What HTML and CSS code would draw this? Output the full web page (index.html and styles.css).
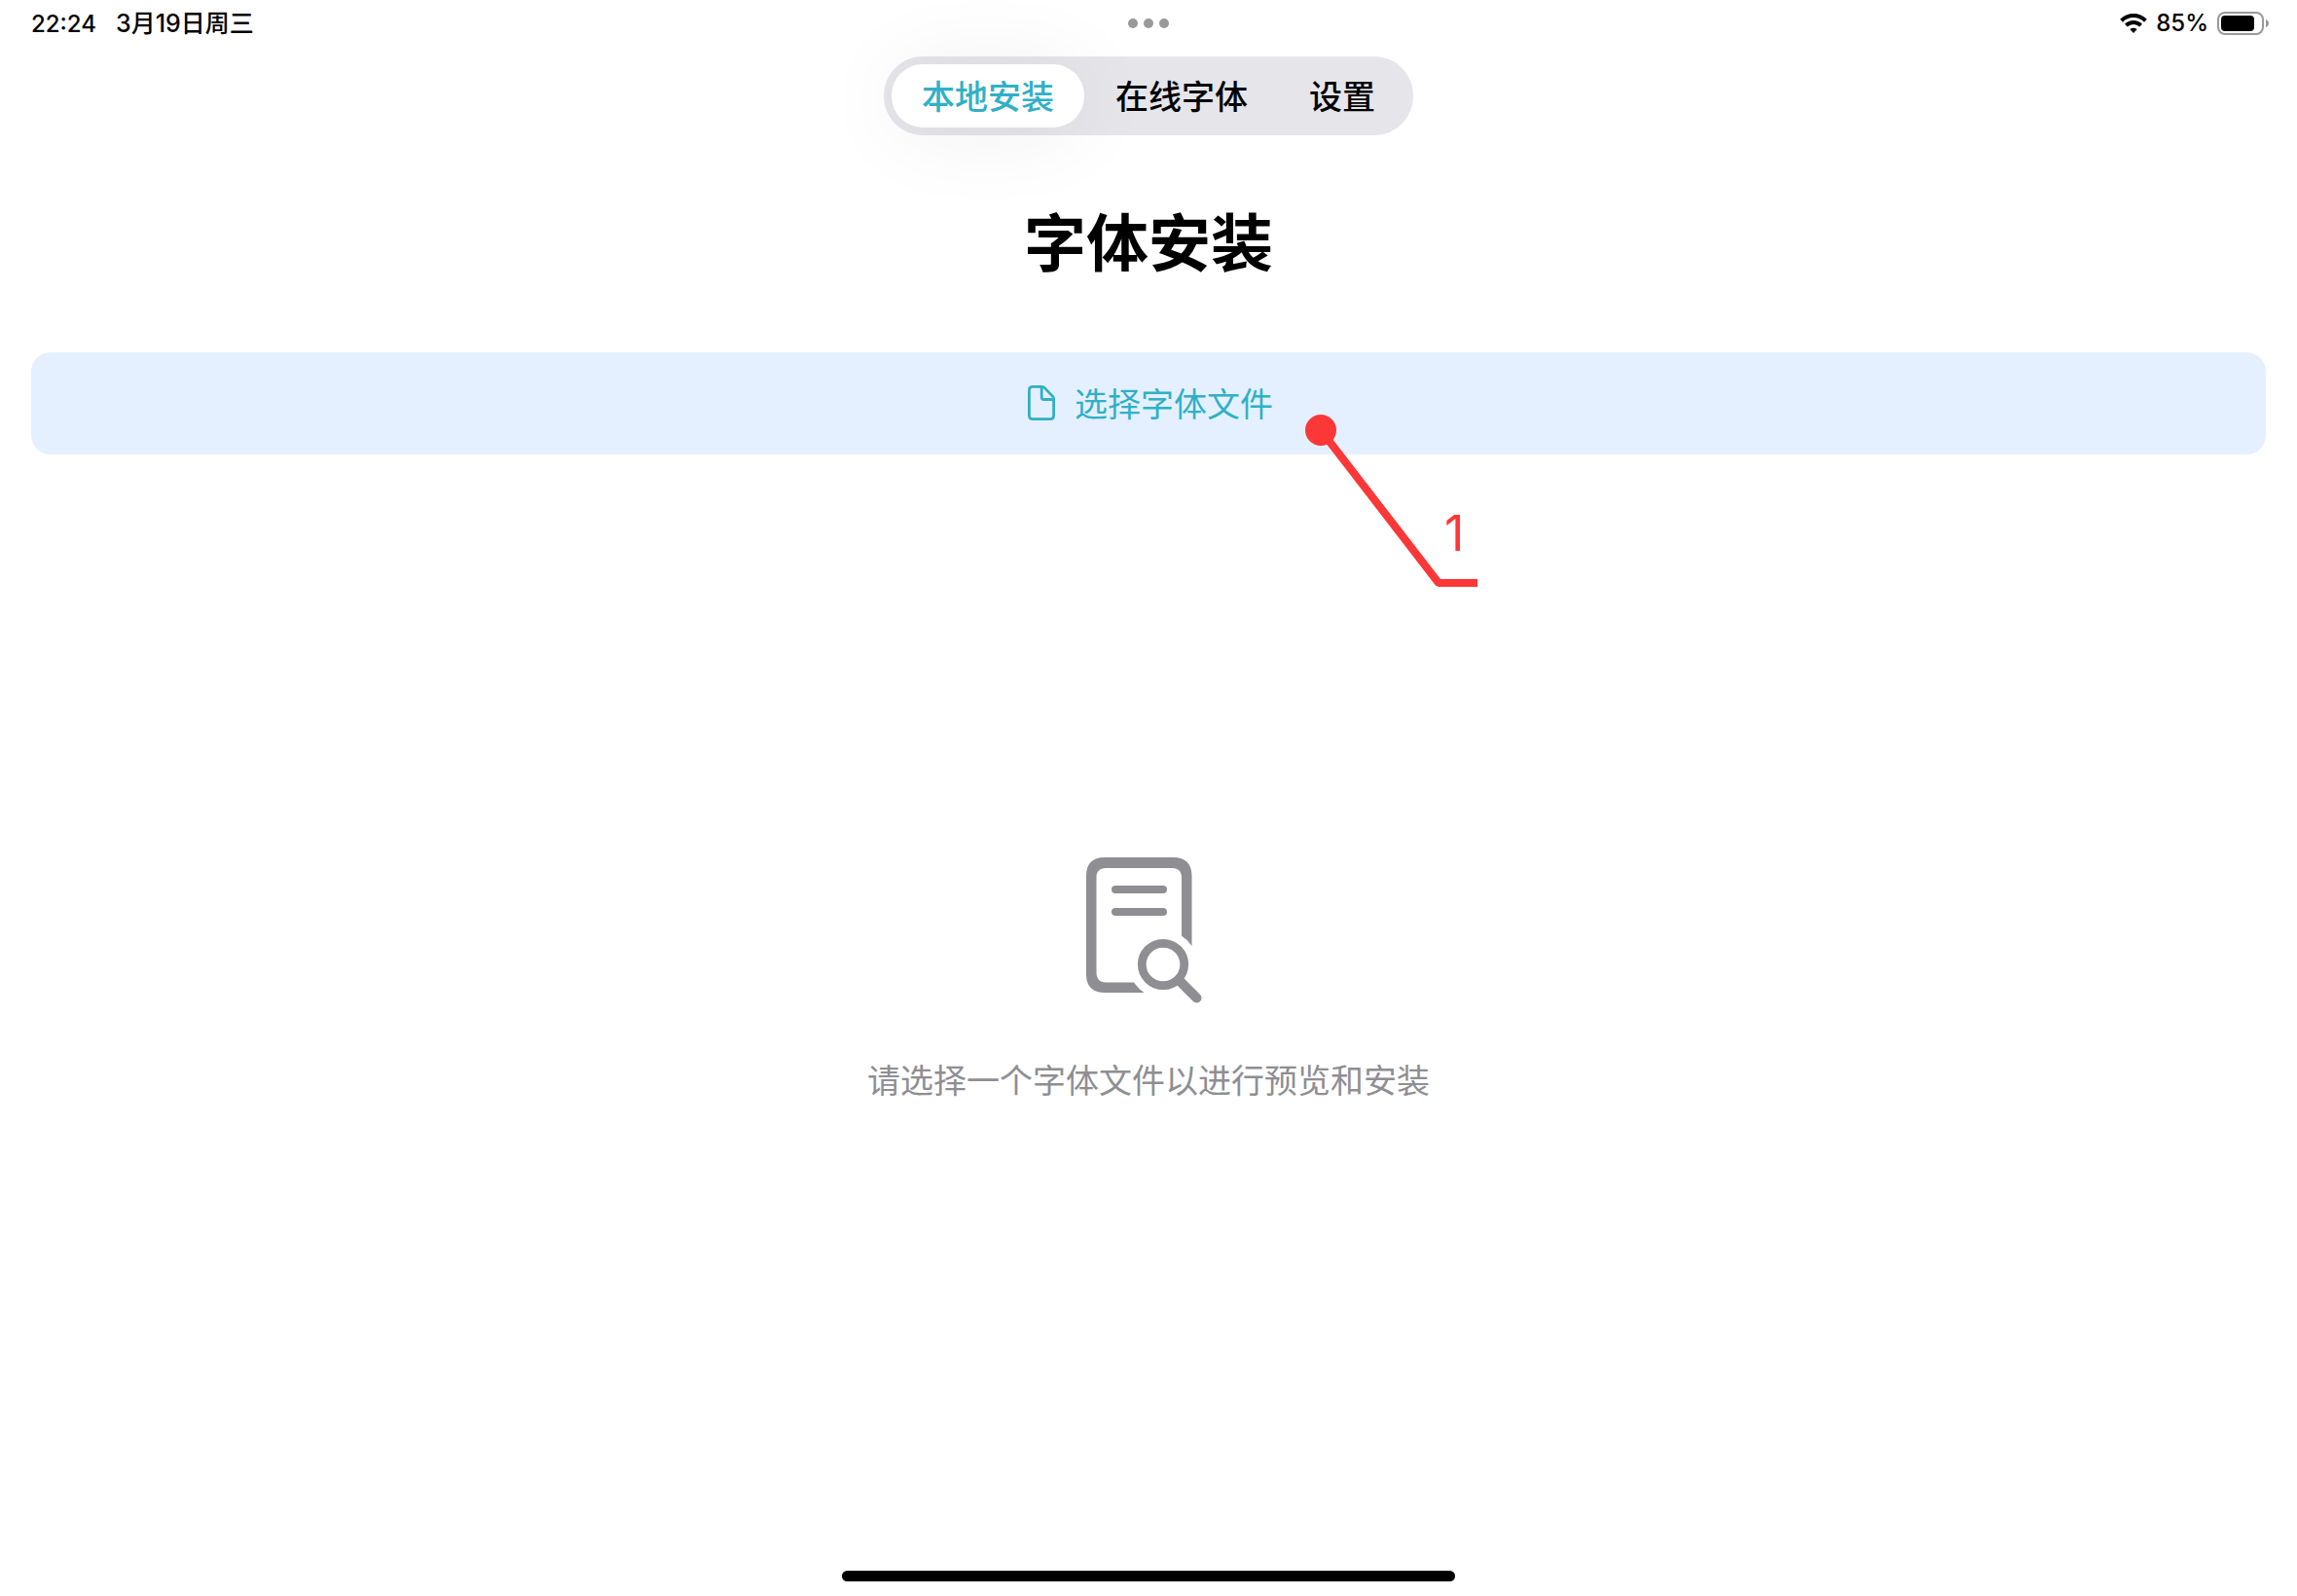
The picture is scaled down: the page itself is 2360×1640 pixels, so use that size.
FILE: index.html
```html
<!DOCTYPE html>
<html lang="zh-CN">
<head>
<meta charset="utf-8">
<meta name="viewport" content="width=device-width, initial-scale=1">
<title>字体安装</title>
<link rel="stylesheet" href="styles.css">
</head>
<body>
<header class="status-bar">
  <div class="status-left"><time>22:24</time><span class="date">3月19日周三</span></div>
  <div class="multitask" aria-hidden="true"><i></i><i></i><i></i></div>
  <div class="status-right">
    <svg class="wifi" width="28" height="20" viewBox="0 0 28 20" fill="none" stroke="#000" stroke-width="4" aria-hidden="true">
      <path d="M1.600 7.200C8.600 .4 19.400 .4 26.400 7.200"/>
      <path d="M6.400 12.100c4.300-4.100 10.900-4.100 15.200 0"/>
      <path d="M14 20l-3.700-3.900c2.200-1.900 5.200-1.900 7.400 0z" fill="#000" stroke="none"/>
    </svg>
    <span>85%</span>
    <svg class="battery" width="54" height="24" viewBox="0 0 54 24" aria-hidden="true">
      <rect x="1" y="1" width="46" height="22" rx="7" fill="none" stroke="#999" stroke-width="2"/>
      <rect x="4" y="4" width="34" height="16" rx="4"/>
      <path d="M50 8c4 1.500 4 6.500 0 8z" fill="#999"/>
    </svg>
  </div>
</header>
<nav class="tabs">
  <button class="tab tab-active" type="button" aria-current="page">本地安装</button>
  <button class="tab" type="button">在线字体</button>
  <button class="tab" type="button">设置</button>
</nav>
<main class="page">
  <h1 class="title">字体安装</h1>
  <div class="picker">
    <button class="picker-button" type="button">
      <svg width="28" height="36" viewBox="0 0 28 36" fill="none" stroke="currentColor" stroke-width="2.800" stroke-linejoin="round" aria-hidden="true">
        <path d="M5 1.400h9.500c1.200 0 1.900.3 2.800 1.200l8.100 8.500c.9.900 1.200 1.700 1.200 2.900V31c0 2.400-1.200 3.600-3.600 3.600H5c-2.400 0-3.600-1.200-3.600-3.600V5c0-2.400 1.200-3.600 3.600-3.600z"/>
        <path d="M14.200 1.500v10.700c0 1.500.8 2.300 2.300 2.300h10"/>
      </svg>
      <span>选择字体文件</span>
    </button>
    <div class="callout">
      <svg width="180" height="180" viewBox="0 0 180 180" aria-hidden="true">
        <circle cx="17" cy="16" r="16" fill="#fc3737"/>
        <path d="M17 16L138 173h40" fill="none" stroke="#fc3737" stroke-width="8" stroke-linejoin="bevel"/>
      </svg>
      <span class="callout-label">1</span>
    </div>
  </div>
  <section class="empty">
    <svg width="128" height="146" viewBox="0 0 128 146" fill="none" stroke="#8e8e93" stroke-linecap="round" aria-hidden="true">
      <mask id="lens-gap" maskUnits="userSpaceOnUse" x="0" y="0" width="120" height="146">
        <rect width="120" height="146" fill="#fff" stroke="none"/>
        <circle cx="79" cy="110" r="35" fill="#000" stroke="none"/>
      </mask>
      <path mask="url(#lens-gap)" fill="#8e8e93" fill-rule="evenodd" stroke="none" d="M19 0h70.500C102 0 108.500 6.500 108.500 19v101c0 12.500-6.500 19-19 19H19C6.500 139 0 132.500 0 120V19C0 6.500 6.500 0 19 0zM20 11c-6 0-9.500 3.500-9.500 9.500v98c0 6 3.500 10 9.500 10h68.500c6 0 9.500-4 9.500-10v-98c0-6-3.500-9.500-9.500-9.500z"/>
      <path d="M30 33h49M30 56h49" stroke-width="8"/>
      <circle cx="79" cy="110" r="21.700" stroke-width="8.700"/>
      <path d="M96 127l17.500 17.500" stroke-width="10"/>
    </svg>
    <p>请选择一个字体文件以进行预览和安装</p>
  </section>
</main>
<footer class="home"><div class="home-indicator"></div></footer>
</body>
</html>
```
FILE: styles.css
```css
* {
  box-sizing: border-box;
}

body {
  margin: 0;
  min-height: 100vh;
  display: flex;
  flex-direction: column;
  background: #fff;
  color: #000;
  font-family: Inter, "Noto Sans CJK SC", sans-serif;
  font-size: 34px;
}

button {
  border: 0;
  font: inherit;
  cursor: pointer;
}

svg {
  display: block;
  overflow: visible;
}

.status-bar {
  display: grid;
  grid-template-columns: 1fr auto 1fr;
  align-items: center;
  height: 48px;
  padding: 0 28px 0 32px;
  font-size: 24px;
  line-height: 32px;
  font-weight: 500;
}

.status-left {
  display: flex;
  align-items: baseline;
  gap: 20px;
}

.date {
  font-size: 25px;
}

.status-right {
  display: flex;
  align-items: center;
  justify-content: flex-end;
  gap: 9px;
}

.multitask {
  display: flex;
  gap: 6px;
  margin-right: 4px;
}

.multitask i {
  width: 10px;
  height: 10px;
  border-radius: 50%;
  background: #999;
}

.tabs {
  display: flex;
  gap: 1px;
  align-self: center;
  margin-top: 10px;
  padding: 8px;
  border-radius: 40px;
  background: #e5e5ea;
}

.tab {
  height: 65px;
  padding: 0 31px 3px;
  border-radius: 32px;
  background: none;
  color: #000;
  font-weight: 500;
}

.tab-active {
  background: #fff;
  color: #30b0c7;
  box-shadow: 0 4px 90px rgba(0, 0, 0, 0.07);
}

.page {
  flex: 1;
  display: flex;
  flex-direction: column;
  padding: 71px 32px 0;
}

.title {
  margin: 0 0 72px;
  font-size: 64px;
  line-height: 80px;
  font-weight: 700;
  text-align: center;
}

.picker {
  position: relative;
}

.picker-button {
  display: flex;
  align-items: center;
  justify-content: center;
  gap: 20px;
  width: 100%;
  height: 105px;
  padding: 0 0 2px 4px;
  border-radius: 20px;
  background: #e4f0ff;
  color: #30b0c7;
}

.callout {
  position: absolute;
  top: 64px;
  left: calc(50% + 160px);
  pointer-events: none;
}

.callout-label {
  position: absolute;
  top: 92px;
  left: 144px;
  color: #fc3737;
  font-family: Inter, sans-serif;
  font-size: 50px;
  line-height: 60px;
}

.empty {
  flex: 1;
  display: flex;
  flex-direction: column;
  align-items: center;
  justify-content: center;
  gap: 60px;
  padding-top: 4px;
  color: #8e8e93;
}

.empty p {
  margin: 0;
  line-height: 48px;
}

.home {
  display: flex;
  justify-content: center;
  padding: 70px 0 15px;
}

.home-indicator {
  width: 630px;
  height: 11px;
  border-radius: 6px;
  background: #000;
}
```
